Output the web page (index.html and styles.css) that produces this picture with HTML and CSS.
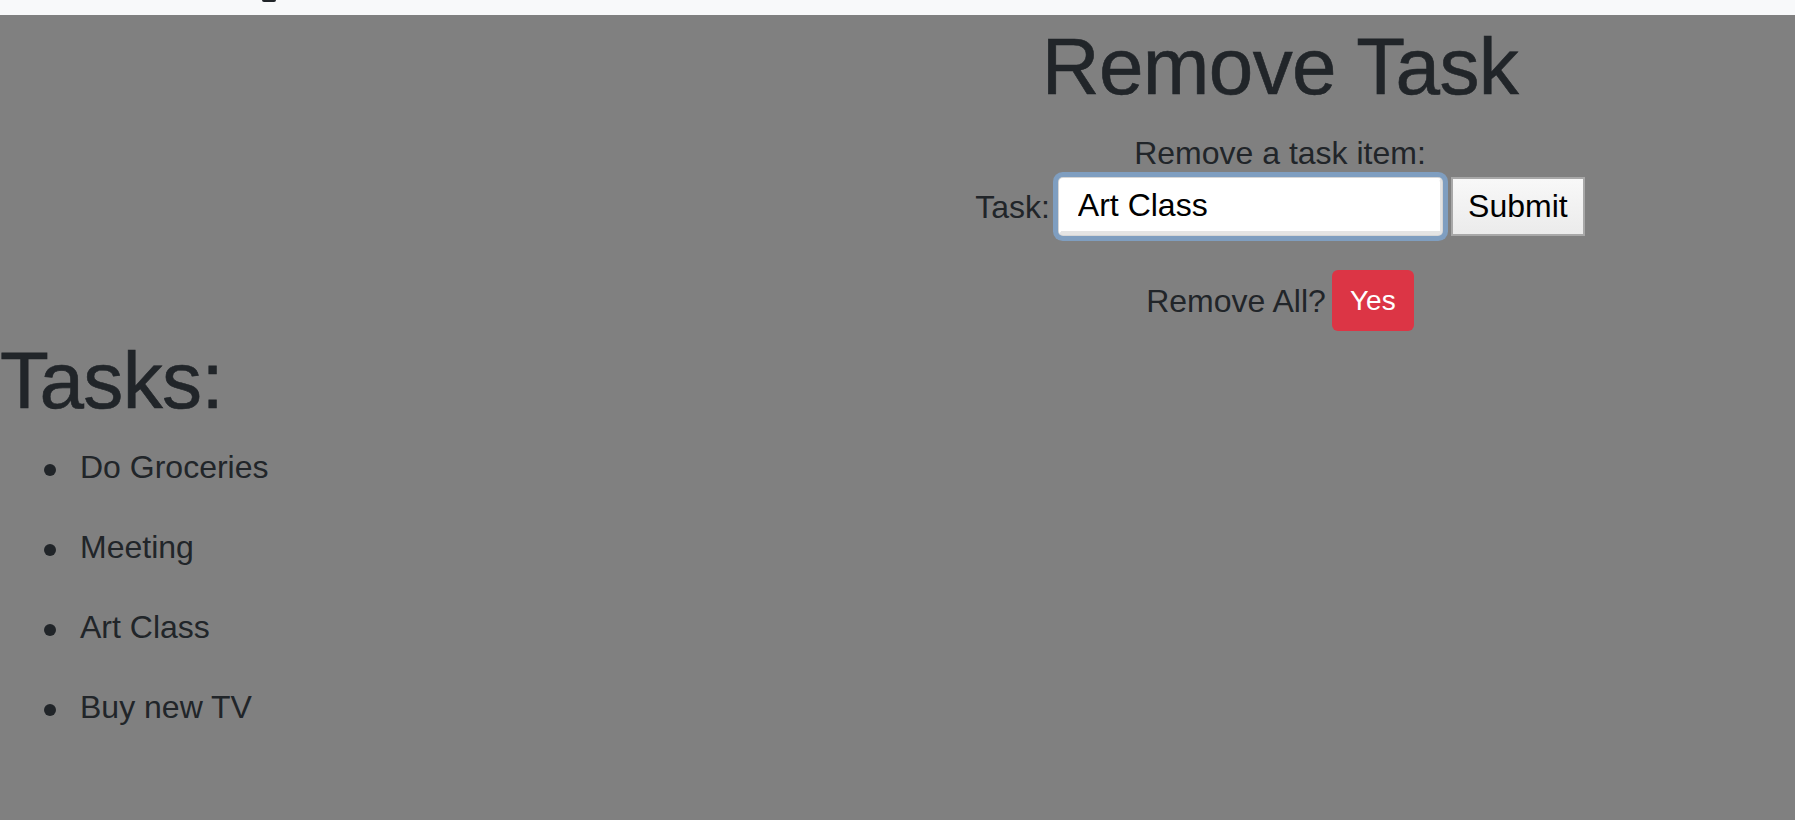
FILE: index.html
```html
<!DOCTYPE html>
<html lang="en">
<head>
<meta charset="utf-8">
<title>Tasks</title>
<link rel="stylesheet" href="styles.css">
</head>
<body>
<div class="topbar"><span class="topbar-glyph"></span></div>
<main class="layout">
  <section class="remove">
    <h1 class="title">Remove Task</h1>
    <p class="lead">Remove a task item:</p>
    <form class="task-form">
      <label class="label" for="task">Task:</label>
      <input class="task-input" id="task" type="text" value="Art Class">
      <button class="submit" type="button">Submit</button>
    </form>
    <div class="remove-all">
      <span class="label">Remove All?</span>
      <button class="btn-danger" type="button">Yes</button>
    </div>
  </section>
  <section class="tasks">
    <h1 class="title tasks-title">Tasks:</h1>
    <ul class="task-list">
      <li>Do Groceries</li>
      <li>Meeting</li>
      <li>Art Class</li>
      <li>Buy new TV</li>
    </ul>
  </section>
</main>
</body>
</html>
```
FILE: styles.css
```css
* { box-sizing: border-box; }
html, body { margin: 0; padding: 0; }
body {
  background: #808080;
  color: #212529;
  font-family: "Liberation Sans", Arial, sans-serif;
  font-size: 32px;
  line-height: 48px;
  height: 820px;
  overflow: hidden;
}
.topbar {
  height: 15px;
  background: #f8f9fa;
  display: flex;
  align-items: flex-start;
}
.topbar-glyph {
  display: block;
  margin-left: 262px;
  width: 14px;
  height: 2px;
  background: #212529;
  border-radius: 0 0 3px 3px;
}
.layout {
  display: grid;
  grid-template-columns: 765px 1fr;
}
.remove {
  grid-column: 2;
  text-align: center;
}
.tasks {
  grid-column: 1 / -1;
}
.title {
  font-size: 80px;
  line-height: 96px;
  font-weight: 400;
  letter-spacing: -0.6px;
  margin: 4px 0 14px;
  -webkit-text-stroke: 0.6px #212529;
}
.tasks-title {
  margin: 2px 0 14px;
}
.lead {
  margin: 0;
}
.task-form {
  display: flex;
  justify-content: center;
  align-items: center;
  gap: 9px;
  height: 59px;
  margin: 0 0 34px;
}
.label {
  display: block;
}
.task-input {
  width: 383px;
  height: 57px;
  font-family: "Liberation Sans", Arial, sans-serif;
  font-size: 32px;
  color: #000;
  background: #fff;
  border: 2px solid #fff;
  border-right-color: #e4e4e4;
  border-bottom: 4px solid #e4e4e4;
  border-radius: 4px;
  padding: 0 0 0 17px;
  outline: none;
  box-shadow: 0 0 0 1px #d6d6d6, 0 0 0 6px #7f9ec0;
}
.submit {
  width: 134px;
  height: 59px;
  font-family: "Liberation Sans", Arial, sans-serif;
  font-size: 32px;
  color: #000;
  background: linear-gradient(#f8f8f8, #ebebeb);
  border: 2px solid #a8a8a8;
  border-radius: 0;
  padding: 0;
}
.remove-all {
  display: flex;
  justify-content: center;
  align-items: center;
  gap: 6px;
  height: 61px;
}
.btn-danger {
  width: 82px;
  height: 61px;
  background: #dc3545;
  color: #fff;
  border: none;
  border-radius: 6px;
  font-family: "Liberation Sans", Arial, sans-serif;
  font-size: 28px;
  padding: 0;
}
.task-list {
  margin: 0;
  padding-left: 80px;
  list-style: none;
}
.task-list li {
  margin-bottom: 32px;
}
.task-list li::before {
  content: "";
  display: inline-block;
  width: 12px;
  height: 12px;
  border-radius: 50%;
  background: #212529;
  margin-left: -36px;
  margin-right: 24px;
  vertical-align: middle;
}
```
